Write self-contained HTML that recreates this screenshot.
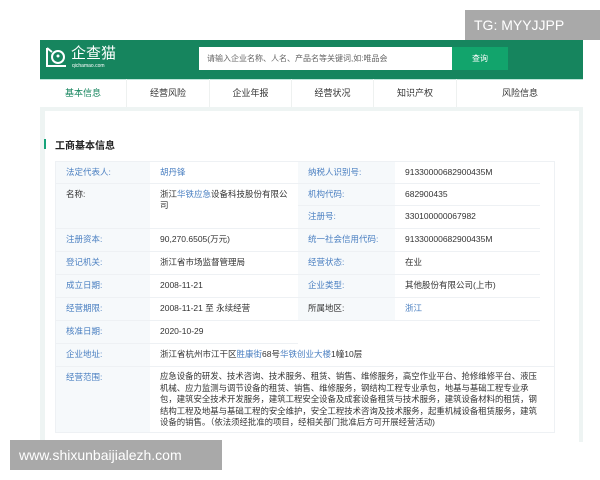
<!DOCTYPE html>
<html><head><meta charset="utf-8"><style>
*{margin:0;padding:0;box-sizing:border-box}
body{width:600px;height:480px;background:#fff;position:relative;overflow:hidden;font-family:"Liberation Sans","Noto Sans CJK SC",sans-serif;font-size:8.5px;color:#333}
.a{position:absolute}
.l{color:#4a7fc1}
.c{position:absolute;border-bottom:1px solid #eef1f4;padding:5px 0 0 10px;line-height:11px}
.lb{background:#f6f9fb}
.nav{position:absolute;top:79px;height:28px;line-height:28px;text-align:center;font-size:9px;color:#333;width:83px;border-right:1px solid #eef1f0}
</style></head><body>
<div class="a" style="left:465px;top:10px;width:135px;height:30px;background:#a9a9a9;color:#fff;font-size:14px;line-height:30px;padding-left:9px">TG: MYYJJPP</div>
<div class="a" style="left:40px;top:40px;width:543px;height:39px;background:#16855e"></div>
<svg class="a" style="left:44px;top:44px" width="26" height="26" viewBox="0 0 26 26"><path d="M3 4 L3 22 L22 22 M3 4 L8 8" stroke="#fff" stroke-width="2" fill="none"/><circle cx="14" cy="13" r="6" stroke="#fff" stroke-width="2" fill="none"/><circle cx="14" cy="12" r="1.5" fill="#fff"/></svg>
<div class="a" style="left:71px;top:45px;color:#fff;font-size:15px;line-height:17px">企查猫</div>
<div class="a" style="left:72px;top:63px;color:#fff;font-size:5px">qichamao.com</div>
<div class="a" style="left:199px;top:47px;width:253px;height:23px;background:#fff;color:#666;font-size:8px;line-height:23px;padding-left:8px">请输入企业名称、人名、产品名等关键词,如:唯品会</div>
<div class="a" style="left:452px;top:47px;width:56px;height:23px;background:#12a46c;color:#fff;font-size:8px;line-height:23px;text-align:center">查询</div>
<div class="a" style="left:40px;top:79px;width:543px;height:1px;background:#bfe6da"></div>
<div class="nav" style="left:40px;width:87px;color:#16855e">基本信息</div>
<div class="nav" style="left:127px">经营风险</div>
<div class="nav" style="left:210px;width:82px">企业年报</div>
<div class="nav" style="left:292px;width:82px">经营状况</div>
<div class="nav" style="left:374px;width:83px">知识产权</div>
<div class="nav" style="left:457px;width:126px;border:none">风险信息</div>
<div class="a" style="left:40px;top:107px;width:543px;height:335px;background:#eef4f3"></div>
<div class="a" style="left:45px;top:111px;width:534px;height:331px;background:#fff"></div>
<div class="a" style="left:44px;top:139px;width:2px;height:10px;background:#16a37a"></div>
<div class="a" style="left:55px;top:137px;font-size:10px;font-weight:bold;color:#222">工商基本信息</div>
<div class="a" style="left:55px;top:161px;width:500px;height:272px;border:1px solid #eef1f4"></div>
<div class="c lb l" style="left:56px;top:162px;width:94px;height:22px">法定代表人:</div>
<div class="c l" style="left:150px;top:162px;width:148px;height:22px">胡丹锋</div>
<div class="c lb" style="left:56px;top:184px;width:94px;height:45px">名称:</div>
<div class="c" style="left:150px;top:184px;width:148px;height:45px;padding-right:4px">浙江<span class="l">华铁应急</span>设备科技股份有限公司</div>
<div class="c lb l" style="left:298px;top:162px;width:97px;height:22px">纳税人识别号:</div>
<div class="c" style="left:395px;top:162px;width:145px;height:22px">91330000682900435M</div>
<div class="c lb l" style="left:298px;top:184px;width:97px;height:22px">机构代码:</div>
<div class="c" style="left:395px;top:184px;width:145px;height:22px">682900435</div>
<div class="c lb l" style="left:298px;top:206px;width:97px;height:23px">注册号:</div>
<div class="c" style="left:395px;top:206px;width:145px;height:23px">330100000067982</div>
<div class="c lb l" style="left:56px;top:229px;width:94px;height:23px">注册资本:</div><div class="c" style="left:150px;top:229px;width:148px;height:23px">90,270.6505(万元)</div>
<div class="c lb l" style="left:298px;top:229px;width:97px;height:23px">统一社会信用代码:</div><div class="c" style="left:395px;top:229px;width:145px;height:23px">91330000682900435M</div>
<div class="c lb l" style="left:56px;top:252px;width:94px;height:23px">登记机关:</div><div class="c" style="left:150px;top:252px;width:148px;height:23px">浙江省市场监督管理局</div>
<div class="c lb l" style="left:298px;top:252px;width:97px;height:23px">经营状态:</div><div class="c" style="left:395px;top:252px;width:145px;height:23px">在业</div>
<div class="c lb l" style="left:56px;top:275px;width:94px;height:23px">成立日期:</div><div class="c" style="left:150px;top:275px;width:148px;height:23px">2008-11-21</div>
<div class="c lb l" style="left:298px;top:275px;width:97px;height:23px">企业类型:</div><div class="c" style="left:395px;top:275px;width:145px;height:23px">其他股份有限公司(上市)</div>
<div class="c lb l" style="left:56px;top:298px;width:94px;height:23px">经营期限:</div><div class="c" style="left:150px;top:298px;width:148px;height:23px">2008-11-21 至 永续经营</div>
<div class="c lb" style="left:298px;top:298px;width:97px;height:23px">所属地区:</div><div class="c l" style="left:395px;top:298px;width:145px;height:23px">浙江</div>
<div class="c lb l" style="left:56px;top:321px;width:94px;height:23px">核准日期:</div><div class="c" style="left:150px;top:321px;width:148px;height:23px">2020-10-29</div>
<div class="c lb l" style="left:56px;top:344px;width:94px;height:23px">企业地址:</div><div class="c" style="left:150px;top:344px;width:405px;height:23px">浙江省杭州市江干区<span class="l">胜康街</span>68号<span class="l">华铁创业大楼</span>1幢10层</div>
<div class="c lb l" style="left:56px;top:367px;width:94px;height:66px">经营范围:</div>
<div class="c" style="left:150px;top:367px;width:405px;height:66px;line-height:11.6px;padding:4px 14px 0 10px;font-size:8.4px">应急设备的研发、技术咨询、技术服务、租赁、销售、维修服务，高空作业平台、抢修维修平台、液压机械、应力监测与调节设备的租赁、销售、维修服务，钢结构工程专业承包，地基与基础工程专业承包，建筑安全技术开发服务，建筑工程安全设备及成套设备租赁与技术服务，建筑设备材料的租赁，钢结构工程及地基与基础工程的安全维护，安全工程技术咨询及技术服务，起重机械设备租赁服务，建筑设备的销售。（依法须经批准的项目，经相关部门批准后方可开展经营活动)</div>
<div class="a" style="left:10px;top:440px;width:212px;height:30px;background:#a9a9a9;color:#fff;font-size:14px;line-height:30px;padding-left:9px">www.shixunbaijialezh.com</div>
</body></html>
